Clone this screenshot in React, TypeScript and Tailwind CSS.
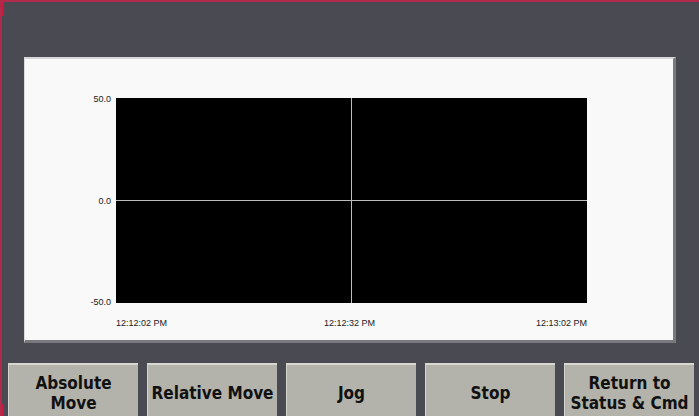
import React from 'react';

const buttons = [
  ['Absolute', 'Move'],
  ['Relative Move'],
  ['Jog'],
  ['Stop'],
  ['Return to', 'Status & Cmd'],
];

function TrendChart() {
  return (
    <div className="flex flex-col">
      <div className="flex">
        {/* y axis labels */}
        <div className="flex w-[91px] flex-col justify-between pr-[5px] text-right text-[9px] leading-[10px] text-[#222]">
          <span className="-mt-[4px]">50.0</span>
          <span>0.0</span>
          <span className="-mb-[4px]">-50.0</span>
        </div>
        <div className="relative h-[205px] w-[471px] bg-black">
          <div className="absolute left-[235px] top-0 h-full w-px bg-[#bdbdbd]" />
          <div className="absolute left-0 top-[102px] h-px w-full bg-[#bdbdbd]" />
        </div>
      </div>
      <div className="ml-[91px] mt-[15px] flex w-[471px] justify-between text-[9px] leading-[10px] text-[#222]">
        <span>12:12:02 PM</span>
        <span className="-ml-[4px]">12:12:32 PM</span>
        <span>12:13:02 PM</span>
      </div>
    </div>
  );
}

export default function App() {
  return (
    <div
      className="relative h-[416px] w-[699px] overflow-hidden border-l-2 border-t-2 border-[#b02a4c] bg-[#4a4a52]"
      style={{ fontFamily: '"Liberation Sans", Arial, sans-serif' }}
    >
      <div className="absolute left-[-2px] top-[-2px] h-[16px] w-[4px] bg-[#c8193f]" />
      <div className="absolute bottom-0 left-[-2px] h-[12px] w-[4px] bg-[#c8193f]" />

      <div className="ml-[22px] mt-[55px] h-[286px] w-[652px] border-b-[3px] border-l border-r-[3px] border-t-2 border-b-[#7a7a7e] border-l-[#dcdcdc] border-r-[#7a7a7e] border-t-[#d6d6d6] bg-[#f9f9f9] pt-[39px]">
        <TrendChart />
      </div>

      <div className="ml-[6px] mt-[20px] flex gap-[9px]">
        {buttons.map((lines, i) => (
          <div
            key={i}
            className="flex h-[60px] w-[130px] flex-col items-center justify-start border-l border-t-2 border-l-[#d4d4cc] border-t-[#d8d8d0] bg-[#b3b3ab] text-[17px] font-bold leading-[20px] text-[#111]"
            style={{
              fontFamily: '"DejaVu Sans Condensed", "DejaVu Sans", Verdana, sans-serif',
              paddingTop: lines.length === 1 ? 18 : 8,
            }}
          >
            {lines.map((l) => (
              <span key={l} className="whitespace-nowrap">{l}</span>
            ))}
          </div>
        ))}
      </div>
    </div>
  );
}
